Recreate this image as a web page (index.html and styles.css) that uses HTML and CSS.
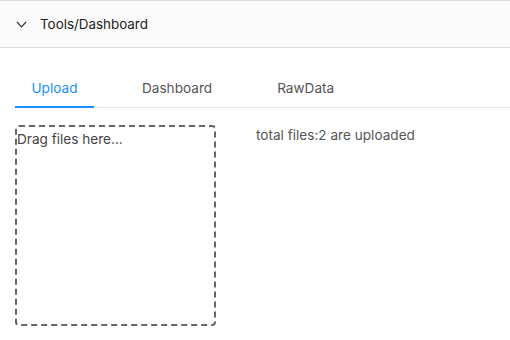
FILE: index.html
```html
<!DOCTYPE html>
<html lang="en">
<head>
    <meta charset="UTF-8">
    <title>Tools/Dashboard</title>
    <link rel="stylesheet" href="styles.css">
</head>
<body>
    <div class="panel-header">
        <svg class="chevron" width="11" height="7" viewBox="0 0 11 7">
            <path d="M1 1 L5.5 5.8 L10 1" fill="none" stroke="#333" stroke-width="1.2"/>
        </svg>
        <span>Tools/Dashboard</span>
    </div>

    <div class="content">
        <div class="tabs">
            <div class="tab active">Upload</div>
            <div class="tab">Dashboard</div>
            <div class="tab">RawData</div>
        </div>

        <div class="upload-row">
            <div class="dropzone">Drag files here...</div>
            <div class="status">total files:2 are uploaded</div>
        </div>
    </div>
</body>
</html>
```

FILE: styles.css
```css
body {
    font-family: Inter, 'Liberation Sans', sans-serif;
    margin: 0;
    padding: 0;
    background: #fff;
    color: #333;
}
.panel-header {
    display: flex;
    align-items: center;
    height: 46px;
    padding-left: 16px;
    background: #fafafa;
    border-top: 1px solid #dcdcdc;
    border-bottom: 1px solid #dcdcdc;
    font-size: 13.4px;
    color: #222;
}
.chevron {
    margin-right: 13px;
    margin-top: 1px;
}
.content {
    padding: 0 0 0 15px;
}
.tabs {
    display: flex;
    margin-top: 25px;
    border-bottom: 1px solid #e8e8e8;
}
.tab {
    padding: 7px 0 10px;
    font-size: 13.6px;
    color: #555;
    border-bottom: 2px solid transparent;
    margin-bottom: -1px;
}
.tab:nth-child(1) {
    width: 79px;
    text-align: center;
}
.tab:nth-child(2) {
    margin-left: 48px;
}
.tab:nth-child(3) {
    margin-left: 65px;
}
.tab.active {
    color: #1890ff;
    border-bottom-color: #1890ff;
}
.upload-row {
    display: flex;
    margin-top: 17px;
}
.dropzone {
    box-sizing: border-box;
    width: 201px;
    height: 201px;
    border: 2px dashed #666;
    border-radius: 4px;
    padding: 4px 0 0 0;
    font-size: 13.6px;
    color: #444;
}
.status {
    margin-left: 40px;
    padding-top: 2px;
    font-size: 13.6px;
    color: #555;
}
```
